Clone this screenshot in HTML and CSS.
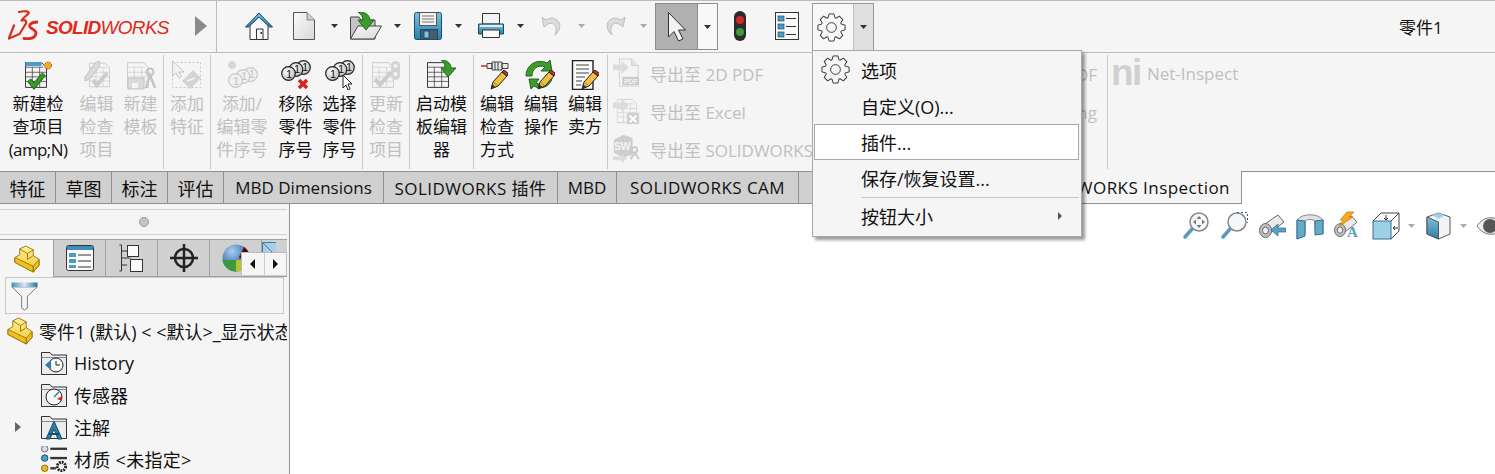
FILE: index.html
```html
<!DOCTYPE html>
<html lang="zh-CN">
<head>
<meta charset="utf-8">
<title>SOLIDWORKS</title>
<link rel="stylesheet" href="styles.css">
</head>
<body>
<svg class="defs" aria-hidden="true">
  <defs>
    <linearGradient id="gBlue" x1="0" y1="0" x2="0" y2="1"><stop offset="0" stop-color="#7fc0dc"/><stop offset="1" stop-color="#2b7ea8"/></linearGradient>
    <linearGradient id="gDoc" x1="0" y1="0" x2="1" y2="1"><stop offset="0" stop-color="#fafafa"/><stop offset="1" stop-color="#d8d8d8"/></linearGradient>
    <linearGradient id="gYel" x1="0" y1="0" x2="0" y2="1"><stop offset="0" stop-color="#fff0a0"/><stop offset="1" stop-color="#f5c828"/></linearGradient>
    <linearGradient id="gFun" x1="0" y1="0" x2="1" y2="0"><stop offset="0" stop-color="#3c8fbd"/><stop offset=".5" stop-color="#d4ecf6"/><stop offset="1" stop-color="#2b6f98"/></linearGradient>
    <radialGradient id="gCoin" cx=".4" cy=".35" r=".7"><stop offset="0" stop-color="#ffffff"/><stop offset="1" stop-color="#b8b8b8"/></radialGradient>
    <radialGradient id="gGloss" cx=".35" cy=".25" r=".7"><stop offset="0" stop-color="#a8d0f0"/><stop offset="1" stop-color="#1c58a8"/></radialGradient>
    <symbol id="tooth8" viewBox="-16 -16 32 32">
      <g fill="none" stroke-linejoin="round">
        <path id="t1" d="M-3.500-10-2.500-14H2.500L3.500-10 4.600-9.600"/>
        <use href="#t1" transform="rotate(45)"/><use href="#t1" transform="rotate(90)"/><use href="#t1" transform="rotate(135)"/>
        <use href="#t1" transform="rotate(180)"/><use href="#t1" transform="rotate(225)"/><use href="#t1" transform="rotate(270)"/><use href="#t1" transform="rotate(315)"/>
        <circle r="5"/>
      </g>
    </symbol>
    <symbol id="coinsOn" viewBox="0 0 30 23">
      <g stroke="#222" stroke-width="1.200" fill="url(#gCoin)">
        <circle cx="22.500" cy="7.500" r="6.800"/><circle cx="15" cy="9.500" r="6.800"/><circle cx="7.500" cy="13.500" r="6.800"/>
      </g>
      <g fill="#111" font-family="Liberation Sans, sans-serif" font-size="11" text-anchor="middle">
        <text x="24" y="11">1</text><text x="16" y="13">1</text><text x="8" y="17.500">1</text>
      </g>
    </symbol>
    <symbol id="coinsOff" viewBox="0 0 30 23">
      <g stroke="#c8c8c8" stroke-width="1.200" fill="#f0f0f0">
        <circle cx="22.500" cy="7.500" r="6.800"/><circle cx="15" cy="9.500" r="6.800"/><circle cx="7.500" cy="13.500" r="6.800"/>
      </g>
      <g fill="#c4c4c4" font-family="Liberation Sans, sans-serif" font-size="11" text-anchor="middle">
        <text x="24" y="11">1</text><text x="16" y="13">1</text><text x="8" y="17.500">1</text>
      </g>
    </symbol>
    <symbol id="sheet" viewBox="0 0 24 28">
      <path d="M.5.5H18L23.500 6V27.500H.5Z" fill="#f4f4f4" stroke="currentColor"/>
      <path d="M.5 5.500H20M.5 11H23.500M.5 16H23.500M.5 21H23.500M8 5.500V27M16 5.500V27" fill="none" stroke="currentColor" stroke-width=".7"/>
    </symbol>
    <symbol id="pencil" viewBox="0 0 18 20">
      <path d="M1 19 3 12 12 2 17 6 8 16Z" fill="#f2c040" stroke="#222"/>
      <path d="M3 12 8 16" stroke="#a87a10"/>
      <path d="M12 2 14 0 18.500 3.500 17 6Z" fill="#c8302b" stroke="#222"/>
      <path d="M1 19 2 14 5.500 17Z" fill="#333"/>
    </symbol>
    <symbol id="cube" viewBox="0 0 27 29">
      <path d="M1 13 6 10V4L12 1 20 5V11L26 15V21L20 28 1 18Z" fill="url(#gYel)" stroke="#9a7a10" stroke-linejoin="round"/>
      <path d="M1 13 20 22V28L1 18ZM20 22 26 15V21L20 28Z" fill="#f0c020" stroke="#9a7a10" stroke-linejoin="round"/>
      <path d="M6 4 14 9 20 5M14 9V15L20 11" fill="none" stroke="#9a7a10"/>
    </symbol>
    <symbol id="folder" viewBox="0 0 28 26">
      <path d="M1.500 24.500V2.500H10L12 5H26.500V24.500Z" fill="#ececec" stroke="#333"/>
      <path d="M1.500 7.500H26.500" stroke="#888" fill="none"/>
    </symbol>
    <symbol id="caret" viewBox="0 0 7 4"><path d="M0 0H7L3.500 4Z" fill="currentColor"/></symbol>
    <symbol id="mag" viewBox="0 0 28 28">
      <circle cx="17" cy="10" r="9" fill="#f4f8fb" stroke="#888" stroke-width="1.500"/>
      <path d="M10 17 3 25" stroke="#5c9abb" stroke-width="3.500" stroke-linecap="round"/>
    </symbol>
    <symbol id="tele" viewBox="0 0 28 24">
      <path d="M4 12 20 1 26 8 11 20Z" fill="#eaeaea" stroke="#666"/>
      <ellipse cx="7.500" cy="16.500" rx="6" ry="7" fill="#c0c0c0" stroke="#666"/>
      <ellipse cx="7.500" cy="16.500" rx="3" ry="3.500" fill="#eee" stroke="#666"/>
    </symbol>
  </defs>
</svg>

<header class="topbar">
  <div class="brand">
    <svg class="ds" viewBox="8 8 30 30"><g fill="none" stroke="#df2a20" stroke-linecap="round" stroke-linejoin="round"><path d="M19 10C25 8.500 30 9.500 28.500 11.500L22.500 17" stroke-width="2.200"/><path d="M21.500 18.500C26 17 27.500 20 25 23L19.500 32 9 36.500" stroke-width="2.200"/><path d="M14 23.500 9 36" stroke-width="2.200"/><path d="M37.500 20C31 20 27.500 23.500 31 26 35.500 28.500 38 31 34 35 31 37 27.500 37 24 36.500" stroke-width="2.800"/></g></svg>
    <span class="wordmark"><b>SOLID</b><i>WORKS</i></span>
    <span class="brand-arrow"></span>
  </div>
  <svg class="ti t-home" viewBox="0 0 28 28"><path d="M5 13V27.500H23V13L14 5Z" fill="#fafafa" stroke="#333"/><path d="M.5 15 14 1 27.500 15 24.500 15 14 5 3.500 15Z" fill="url(#gBlue)" stroke="#17506e"/><path d="M11.500 27.500V17H18V27.500Z" fill="#f4f4f4" stroke="#333"/><rect x="15.500" y="20" width="1.500" height="2" fill="#333"/></svg>
  <svg class="ti t-doc" viewBox="0 0 22 28"><path d="M.5 .5H14L21.500 8V27.500H.5Z" fill="url(#gDoc)" stroke="#555" stroke-linejoin="round"/><path d="M14 .5V8H21.500" fill="#ccc" stroke="#888"/></svg>
  <svg class="ca c-1 dark"><use href="#caret"/></svg>
  <svg class="ti t-open" viewBox="0 0 32 28"><path d="M.5 27V5H9L11 8H25V27Z" fill="#c4c4c4" stroke="#444"/><path d="M.5 27 8 14H31.500L24 27Z" fill="url(#gDoc)" stroke="#444"/><path d="M8 0C15 0 19 2 20 8H24L16 18 8 8H13C13 5 11 2 8 0Z" fill="#3f9a2e" stroke="#1c6a1a"/></svg>
  <svg class="ca c-2 dark"><use href="#caret"/></svg>
  <svg class="ti t-save" viewBox="0 0 28 28"><rect x=".5" y=".5" width="27" height="27" rx="2" fill="url(#gBlue)" stroke="#14506e"/><rect x="5.500" y=".5" width="17" height="13" fill="#f4f4f4" stroke="#555"/><path d="M8 4H20M8 7H20M8 10H20" stroke="#777"/><rect x="6.500" y="17.500" width="17" height="10" fill="#4a5a66" stroke="#14506e"/><rect x="10" y="19" width="5" height="7" fill="#8cc0da" stroke="#14506e"/></svg>
  <svg class="ca c-3 dark"><use href="#caret"/></svg>
  <svg class="ti t-print" viewBox="0 0 26 26"><path d="M4.500 11V.5H21.500V11Z" fill="#f2f2f2" stroke="#333"/><path d="M.5 11H25.500V21H.5Z" fill="url(#gBlue)" stroke="#14506e"/><path d="M4.500 17V24.500H21.500V17Z" fill="#fafafa" stroke="#333"/><rect x="2" y="12" width="22" height="2" fill="#dbeef6"/></svg>
  <svg class="ca c-4 dark"><use href="#caret"/></svg>
  <svg class="ti t-undo" viewBox="0 0 22 22"><path d="M1 2 3 12 7 9C11 7 16 9 15 17L14 20C20 15 20 8 16 5 12 2 8 3 5 5Z" fill="#dcdcdc" stroke="#bdbdbd"/></svg>
  <svg class="ca c-5 light"><use href="#caret"/></svg>
  <svg class="ti t-redo" viewBox="0 0 22 22"><path d="M21 2 19 12 15 9C11 7 6 9 7 17L8 20C2 15 2 8 6 5 10 2 14 3 17 5Z" fill="#dcdcdc" stroke="#bdbdbd"/></svg>
  <svg class="ca c-6 light"><use href="#caret"/></svg>
  <div class="sel">
    <span class="sel-main"><svg class="arrow-ic" viewBox="0 0 20 32"><path d="M1.500 1.500V26L7 20.500 11.500 30 16 28 11.500 19H18.500Z" fill="#f2f2f2" stroke="#333" stroke-linejoin="round"/></svg></span>
    <span class="sel-drop"><svg class="ca dark"><use href="#caret"/></svg></span>
  </div>
  <svg class="ti t-light" viewBox="0 0 12 30"><rect width="12" height="30" rx="6" fill="#2b2b2b"/><circle cx="6" cy="9" r="4" fill="#d22a2a"/><circle cx="6" cy="21" r="4" fill="#3c9a3c"/></svg>
  <svg class="ti t-list" viewBox="0 0 24 28"><rect x=".5" y=".5" width="23" height="27" fill="#fafafa" stroke="#333"/><rect x="3" y="4" width="6" height="5" fill="#4d9cc6" stroke="#14506e" stroke-width=".7"/><rect x="3" y="12" width="6" height="5" fill="#4d9cc6" stroke="#14506e" stroke-width=".7"/><rect x="3" y="20" width="6" height="5" fill="#4d9cc6" stroke="#14506e" stroke-width=".7"/><path d="M11 6.500H21M11 14.500H21M11 22.500H21" stroke="#333"/></svg>
  <div class="gearbtn">
    <span class="gear-main"><svg class="gear"><use href="#tooth8"/></svg></span>
    <span class="gear-drop"><svg class="ca dark"><use href="#caret"/></svg></span>
  </div>
  <div class="doc-title">零件1</div>
</header>

<section class="ribbon">
  <div class="grp g1">
    <button class="rb w66"><svg class="ri" viewBox="0 0 32 30"><use href="#sheet" x="3" y="1" width="22" height="28" class="ink"/><rect x="3.500" y="2" width="16" height="4" fill="#4d9cc6"/><circle cx="26" cy="5.500" r="3.500" fill="#f5a91e" stroke="#b8500e" stroke-dasharray="1.500 1"/><path d="M7 20 12 26 22 14" fill="none" stroke="#1c6a1a" stroke-width="5"/><path d="M7 20 12 26 22 14" fill="none" stroke="#3f9a2e" stroke-width="3"/></svg><span>新建检<br>查项目<br><em class="amp">(amp;N)</em></span></button>
    <button class="rb w41 off"><svg class="ri" viewBox="0 0 32 30"><use href="#sheet" x="8" y="1" width="21" height="28"/><path d="M12 20 16 25 26 13" fill="none" stroke="#ccc" stroke-width="4"/><path d="M4 17 14 3 18 1 19 6 9 19 4 21Z" fill="#dadada" stroke="#c4c4c4"/></svg><span>编辑<br>检查<br>项目</span></button>
    <button class="rb w41 off"><svg class="ri" viewBox="0 0 32 30"><use href="#sheet" x="2" y="1" width="22" height="28"/><circle cx="25" cy="12" r="3.500" fill="none" stroke="#c4c4c4" stroke-width="2"/><path d="M21 28 25 15 30 28" fill="none" stroke="#c4c4c4" stroke-width="2.400"/><rect x="3" y="18" width="16" height="11" fill="#dadada" stroke="#c4c4c4"/><rect x="7" y="23" width="6" height="5" fill="#f4f4f4"/></svg><span>新建<br>模板</span></button>
  </div>
  <div class="grp g2">
    <button class="rb w44 off"><svg class="ri" viewBox="0 0 32 30"><rect x="1.500" y="2.500" width="28" height="25" fill="none" stroke="#c8c8c8" stroke-dasharray="2 2"/><path d="M1.500 1V16L5 13 8 18 10.500 16.500 8 12H13Z" fill="#f2f2f2" stroke="#c4c4c4"/><path d="M11 21 22 10 30 18 19 29Z" fill="#d4d4d4"/><path d="M16 21 24 18" stroke="#f4f4f4" stroke-width="1.500"/></svg><span>添加<br>特征</span></button>
  </div>
  <div class="grp g3">
    <button class="rb w60 off"><svg class="ri" viewBox="0 0 32 30"><circle cx="6" cy="5" r="3.500" fill="#d8d8d8" stroke="#ccc" stroke-dasharray="1.500 1"/><use href="#coinsOff" x="2" y="7" width="30" height="23"/></svg><span>添加/<br>编辑零<br>件序号</span></button>
    <button class="rb w41 on"><svg class="ri" viewBox="0 0 32 30"><use href="#coinsOn" x="1" y="0" width="30" height="23"/><path d="M19 20 27 28M27 20 19 28" stroke="#d8231a" stroke-width="3.500"/></svg><span>移除<br>零件<br>序号</span></button>
    <button class="rb w41 on"><svg class="ri" viewBox="0 0 32 30"><use href="#coinsOn" x="1" y="0" width="30" height="23"/><path d="M19 15V28L22 25 24 30 26 29 24 24H28Z" fill="#fff" stroke="#222"/></svg><span>选择<br>零件<br>序号</span></button>
  </div>
  <div class="grp g4">
    <button class="rb w44 off"><svg class="ri" viewBox="0 0 32 30"><use href="#sheet" x="2" y="1" width="22" height="28"/><path d="M5 19 10 25 21 12" fill="none" stroke="#ccc" stroke-width="4"/><rect x="21" y="1" width="9" height="19" rx="4.500" fill="#d4d4d4"/><circle cx="25.500" cy="6" r="2" fill="#f4f4f4"/><circle cx="25.500" cy="14" r="2" fill="#f4f4f4"/></svg><span>更新<br>检查<br>项目</span></button>
  </div>
  <div class="grp g5">
    <button class="rb w63 on"><svg class="ri" viewBox="0 0 32 30"><use href="#sheet" x="1" y="1" width="22" height="28"/><path d="M15 0C22 0 25 4 25 8H30L22 17 15 8H19C19 4 18 2 15 0Z" fill="#3f9a2e" stroke="#1c6a1a"/></svg><span>启动模<br>板编辑<br>器</span></button>
  </div>
  <div class="grp g6">
    <button class="rb w44 on"><svg class="ri" viewBox="0 0 32 30"><path d="M0 6H6" stroke="#d8231a" stroke-width="1.500"/><path d="M6 3.500H11V8.500H6ZM11 2H21V10H11ZM21 3.500H27V8.500H21Z" fill="#e8e8e8" stroke="#444"/><path d="M14 2V10M17 2V10" stroke="#444"/><use href="#pencil" x="9" y="10" width="18" height="20"/></svg><span>编辑<br>检查<br>方式</span></button>
    <button class="rb w44 on"><svg class="ri" viewBox="0 0 32 30"><path d="M1 16C1 5 12-2 22 3L25 0 27 11 16 11 20 7C13 4 7 9 7 16ZM27 14V17C27 25 17 31 9 26L6 29 4 19H14L11 23C17 26 21 22 21 15Z" fill="#3f9a2e" stroke="#1c6a1a"/><use href="#pencil" x="12" y="10" width="18" height="20"/></svg><span>编辑<br>操作</span></button>
    <button class="rb w44 on"><svg class="ri" viewBox="0 0 32 30"><path d="M3.500 .5H24V29.500H3.500Z" fill="#fafafa" stroke="#222" stroke-width="1.400"/><path d="M7 5H20M7 9H20M7 13H20M7 17H16M7 21H13M7 25H12" stroke="#444"/><use href="#pencil" x="12" y="10" width="18" height="20"/></svg><span>编辑<br>卖方</span></button>
  </div>
  <div class="grp g7">
    <div class="col col-a">
      <div class="xp off"><svg class="xi" viewBox="0 0 30 32"><path d="M8 1H21L28 8V30H8Z" fill="#f4f4f4" stroke="#d0d0d0"/><path d="M21 1V8H28" fill="#e4e4e4" stroke="#d0d0d0"/><path d="M1 7H10V3L18 10 10 17V13H1Z" fill="#dcdcdc"/><rect x="11" y="20" width="18" height="9" fill="#ccc"/><text x="20" y="27.500" class="pdf">PDF</text></svg><span>导出至 2D PDF</span></div>
      <div class="xp off"><svg class="xi" viewBox="0 0 30 32"><use href="#sheet" x="5" y="2" width="22" height="28"/><path d="M1 7H10V3L18 10 10 17V13H1Z" fill="#dcdcdc"/><rect x="16" y="18" width="13" height="12" fill="#d0d0d0"/><path d="M19 21 26 28M26 21 19 28" stroke="#fff" stroke-width="2"/></svg><span>导出至 Excel</span></div>
      <div class="xp off"><svg class="xi" viewBox="0 0 30 32"><path d="M2 6 12 1 22 4V22L12 25 2 20Z" fill="#cfcfcf"/><text x="11" y="17" class="swt">SW</text><circle cx="24" cy="17" r="3" fill="none" stroke="#c8c8c8" stroke-width="2"/><path d="M20 27 24 20 29 27" fill="none" stroke="#c8c8c8" stroke-width="2"/><path d="M1 24H10V21L16 26 10 31V28H1Z" fill="#dcdcdc"/></svg><span>导出至 SOLIDWORKS</span></div>
    </div>
    <div class="col col-b">
      <div class="xp off"><span>导出至 3D PDF</span></div>
      <div class="xp off"><span>导出至 eDrawing</span></div>
    </div>
  </div>
  <div class="grp g8">
    <div class="xp off ni-row"><span class="ni">ni</span><span>Net-Inspect</span></div>
  </div>
</section>

<nav class="tabs">
  <span class="tab tcn">特征</span>
  <span class="tab tcn">草图</span>
  <span class="tab tcn">标注</span>
  <span class="tab tcn">评估</span>
  <span class="tab t160">MBD Dimensions</span>
  <span class="tab t174 wide">SOLIDWORKS 插件</span>
  <span class="tab t59">MBD</span>
  <span class="tab t182 wide">SOLIDWORKS CAM</span>
  <span class="tab tab-fill"></span>
  <span class="tab tab-active wide">SOLIDWORKS Inspection</span>
  <span class="tab-rest"></span>
</nav>

<div class="work">
  <aside class="panel">
    <div class="grip"><span class="dot"></span></div>
    <div class="ptabs">
      <span class="pt pt-on"><svg class="pi" viewBox="0 0 27 29"><use href="#cube"/></svg></span>
      <span class="pt"><svg class="pi" viewBox="0 0 28 26"><rect x=".5" y=".5" width="27" height="25" rx="2" fill="#fafafa" stroke="#333"/><rect x="1" y="1" width="26" height="4" fill="#3c8fbd"/><rect x="3" y="8" width="7" height="4" fill="#4d9cc6"/><rect x="3" y="14" width="7" height="4" fill="#4d9cc6"/><rect x="3" y="20" width="7" height="3" fill="#4d9cc6"/><path d="M12 10H25M12 16H25M12 22H25" stroke="#333"/></svg></span>
      <span class="pt"><svg class="pi" viewBox="0 0 28 28"><path d="M3.500 1V27M3.500 7H9M3.500 21H9" stroke="#333" fill="none"/><path d="M1.500 1H3.500M1.500 27H3.500" stroke="#333"/><rect x="9.500" y="1.500" width="11" height="11" fill="#fafafa" stroke="#333"/><rect x="12.500" y="15.500" width="12" height="12" fill="#fafafa" stroke="#333"/><path d="M3.500 14H12.500" stroke="#333"/></svg></span>
      <span class="pt"><svg class="pi" viewBox="0 0 28 28"><circle cx="14" cy="14" r="9" fill="none" stroke="#222" stroke-width="2.500"/><path d="M14 0V28M0 14H28" stroke="#222" stroke-width="2.500"/></svg></span>
      <span class="pt"><svg class="pi" viewBox="0 0 28 28"><circle cx="14" cy="14" r="13.500" fill="url(#gGloss)"/><path d="M17 14 22 3A13.500 13.500 0 0 1 27.500 14Z" fill="#2a1010" stroke="#b02a20"/><path d="M14 16H27.500A13.500 13.500 0 0 1 14 27.500Z" fill="#b8c030"/><path d="M14 16V27.500A13.500 13.500 0 0 1 .5 16Z" fill="#3c9a3c"/></svg></span>
      <span class="pt pt-cut"><svg class="pi-cut" viewBox="0 0 14 14"><rect x=".5" y=".5" width="20" height="20" fill="#a8cfe4" stroke="#3a7ea8"/><path d="M0 0 10 10" stroke="#3a7ea8"/></svg></span>
      <span class="ptnav"><i class="nav-l"></i><i class="nav-r"></i></span>
    </div>
    <div class="filter"><svg class="funnel" viewBox="0 0 28 30"><path d="M1 5H27L17 15V27L14 29 11 27V15Z" fill="#f4f4f4" stroke="#777"/><path d="M.5.5H27.500V5H.5Z" fill="url(#gFun)"/></svg></div>
    <ul class="tree">
      <li class="node root"><svg class="ni-ic" viewBox="0 0 27 29"><use href="#cube"/></svg><span class="lbl">零件1 (默认) &lt; &lt;默认&gt;_显示状态 1&gt;</span></li>
      <li class="node"><svg class="fo" viewBox="0 0 28 26"><use href="#folder"/><circle cx="16" cy="15" r="7" fill="#f8f8f8" stroke="#222"/><path d="M16 11V15H20" fill="none" stroke="#222"/><path d="M5 15 11 10V20Z" fill="#2f7ba4"/></svg><span class="lbl">History</span></li>
      <li class="node"><svg class="fo" viewBox="0 0 28 26"><use href="#folder"/><circle cx="14" cy="15" r="8" fill="#f8f8f8" stroke="#222"/><path d="M14 15 19 10" stroke="#2f7ba4" stroke-width="1.500"/><path d="M17 17 22 14V19Z" fill="#d8231a"/></svg><span class="lbl">传感器</span></li>
      <li class="node"><i class="exp"></i><svg class="fo" viewBox="0 0 28 26"><use href="#folder"/><path d="M6 25 14 7 22 25H18L14 15 10 25Z" fill="#2f7ba4" stroke="#14506e"/><path d="M9 20H19" stroke="#14506e" stroke-width="2"/></svg><span class="lbl">注解</span></li>
      <li class="node"><svg class="fo" viewBox="0 0 28 28"><circle cx="4" cy="3" r="3.500" fill="#ddd" stroke="#666"/><path d="M10 3H28" stroke="#333" stroke-width="2.500"/><circle cx="4" cy="13" r="3.500" fill="#4d9cc6" stroke="#14506e"/><path d="M10 13H28" stroke="#333" stroke-width="2.500"/><circle cx="4" cy="24" r="3.500" fill="#e9b81a" stroke="#8a6a10"/><path d="M10 24H16" stroke="#333" stroke-width="2.500"/><circle cx="22" cy="22" r="4.500" fill="#f4f4f4" stroke="#222" stroke-width="3" stroke-dasharray="2 1"/></svg><span class="lbl wide-lbl">材质 &lt;未指定&gt;</span></li>
    </ul>
  </aside>
  <main class="view">
    <div class="vbar">
      <svg class="vi v-fit" viewBox="0 0 28 28"><use href="#mag"/><path d="M17 4 14.500 7H19.500ZM17 16 14.500 13H19.500ZM11 10 14 7.500V12.500ZM23 10 20 7.500V12.500Z" fill="#777"/></svg>
      <svg class="vi v-area" viewBox="0 0 28 28"><use href="#mag"/><path d="M17 .5H27.500V11" fill="none" stroke="#555" stroke-dasharray="2 2"/></svg>
      <svg class="vi v-prev" viewBox="0 0 28 24"><use href="#tele"/><path d="M28 14H20V10L13 16 20 22V18H28Z" fill="#5b9fc4" stroke="#2d6f94" stroke-width=".7"/></svg>
      <svg class="vi v-sect" viewBox="0 0 28 26"><path d="M1 7C6 0 22 0 27 7V21C22 17 20 17 19 17V8C16 6 12 6 9 8V21L1 26Z" fill="#e2e2e2" stroke="#888"/><path d="M1 7 9 8V23L1 26ZM19 8 27 7V21L19 22Z" fill="#6aa8c8" stroke="#2d6f94"/></svg>
      <svg class="vi v-dyn" viewBox="0 0 30 31"><use href="#tele" y="4" width="26" height="22"/><path d="M7 9 14 1H21L16 6H20L7 15 10 9Z" fill="#f5a91e" stroke="#c47a10" stroke-width=".7"/><text x="14" y="26" class="va">A</text></svg>
      <svg class="vi v-orient" viewBox="0 0 28 28"><rect x="1" y="9" width="18" height="18" fill="#9dd0e6" stroke="#3a6f8c"/><path d="M1 9 9 1H27V19L19 27M19 9 27 1" fill="none" stroke="#444"/><path d="M14 3V8M12 6 14 8 16 6M26 16H21M23 14 21 16 23 18" fill="none" stroke="#333"/></svg>
      <svg class="ca v-c1 light"><use href="#caret"/></svg>
      <svg class="vi v-disp" viewBox="0 0 25 28"><path d="M12.500 1 24 5V22L12.500 27 1 22V5Z" fill="#f4f4f4" stroke="#555"/><path d="M1 5 12.500 10V27L1 22Z" fill="url(#gBlue)" stroke="#555"/><path d="M6 3 12.500 1 19 3 12.500 7Z" fill="#9dd0e6"/></svg>
      <svg class="ca v-c2 light"><use href="#caret"/></svg>
      <svg class="vi v-eye" viewBox="0 0 30 24"><path d="M1 12C8 1 22 1 29 12 22 23 8 23 1 12Z" fill="#eee" stroke="#777"/><circle cx="14" cy="12" r="7" fill="#555"/></svg>
    </div>
  </main>
</div>

<div class="menu">
  <div class="mi"><svg class="gear menu-gear"><use href="#tooth8"/></svg><span>选项</span></div>
  <div class="mi"><span>自定义(O)...</span></div>
  <div class="mi mi-hot"><span>插件...</span></div>
  <div class="mi"><span>保存/恢复设置...</span></div>
  <div class="msep"></div>
  <div class="mi"><span>按钮大小</span><i class="sub"></i></div>
</div>
</body>
</html>
```
FILE: styles.css
```css
* { box-sizing: border-box; }
html, body { margin: 0; height: 100%; }
body {
  width: 1495px; height: 474px; overflow: hidden; background: #fff; position: relative;
  font-family: "Open Sans", "Noto Sans CJK SC", sans-serif; font-size: 17px; color: #111;
}
.defs { position: absolute; width: 0; height: 0; }
svg { display: block; flex: none; overflow: hidden; }

/* top bar */
.topbar { display: flex; align-items: center; height: 53px; background: #f5f5f5; border-top: 1px solid #bbb; border-bottom: 1px solid #bbb; padding-bottom: 2px; }
.brand { display: flex; align-items: center; width: 217px; height: 51px; margin-bottom: -2px; border-right: 1px solid #bbb; flex: none; padding-left: 8px; }
.ds { width: 30px; height: 30px; margin-top: -4px; }
.wordmark { width: 157px; padding-left: 8px; font-family: "Liberation Sans", sans-serif; font-size: 19px; color: #df2a20; white-space: nowrap; letter-spacing: -.7px; margin-top: 2px; }
.wordmark b { font-style: italic; font-weight: 700; }
.wordmark i { font-weight: 400; }
.brand-arrow { width: 0; height: 0; border-left: 12px solid #8a8a8a; border-top: 10px solid transparent; border-bottom: 10px solid transparent; margin-top: -2px; }
.ti { flex: none; }
.t-home { width: 28px; height: 28px; margin-left: 28px; }
.t-doc { width: 22px; height: 28px; margin-left: 20px; }
.ca { width: 7px; height: 4px; flex: none; }
.ca.dark { color: #333; }
.ca.light { color: #aaa; }
.c-1 { margin-left: 16px; }
.t-open { width: 32px; height: 28px; margin-left: 12px; }
.c-2 { margin-left: 12px; }
.t-save { width: 28px; height: 28px; margin-left: 13px; }
.c-3 { margin-left: 13px; }
.t-print { width: 26px; height: 26px; margin-left: 16px; }
.c-4 { margin-left: 13px; }
.t-undo { width: 22px; height: 22px; margin-left: 17px; }
.c-5 { margin-left: 15px; }
.t-redo { width: 22px; height: 22px; margin-left: 19px; }
.c-6 { margin-left: 14px; }
.sel { display: flex; width: 63px; height: 47px; margin: 2px 0 0 8px; border: 1px solid #8c8c8c; flex: none; }
.sel-main { width: 41px; background: #b0b0b0; display: flex; align-items: center; justify-content: center; }
.arrow-ic { width: 20px; height: 32px; }
.sel-drop { flex: 1; background: #f8f8f8; display: flex; align-items: center; justify-content: center; border-left: 1px solid #8c8c8c; }
.t-light { width: 12px; height: 30px; margin-left: 16px; }
.t-list { width: 24px; height: 28px; margin-left: 29px; }
.gearbtn { display: flex; width: 62px; height: 47px; margin: 2px 0 0 13px; border: 1px solid #9a9a9a; border-bottom: 0; flex: none; }
.gear-main { width: 40px; display: flex; align-items: center; justify-content: center; background: #f8f8f8; padding-right: 3px; }
.gear-drop { flex: 1; background: #e0e0e0; display: flex; align-items: center; justify-content: center; border-left: 1px solid #c0c0c0; }
.gear { width: 31px; height: 31px; stroke: #3a3a3a; }
.doc-title { margin: 2px 0 0 525px; }

/* ribbon */
.ribbon { display: flex; height: 118px; background: #f5f5f5; padding: 2px 0; }
.grp { display: flex; height: 114px; border-right: 1px solid #c8c8c8; flex: none; padding-top: 5px; }
.g1 { width: 164px; padding-left: 5px; }
.g2 { width: 47px; padding-left: 1px; }
.g3 { width: 152px; padding-left: 1px; }
.g4 { width: 47px; padding-left: 1px; }
.g5 { width: 64px; }
.g6 { width: 134px; padding-left: 1px; }
.g7 { width: 500px; padding-left: 3px; padding-top: 3px; }
.g8 { width: 300px; border-right: 0; padding-left: 3px; padding-top: 3px; }
.rb { display: flex; flex-direction: column; align-items: center; border: 0; padding: 0; background: none; font: inherit; color: #111; text-align: center; line-height: 23px; flex: none; }
.rb span { display: block; white-space: nowrap; margin-top: 2px; }
.amp { font-style: normal; letter-spacing: -.6px; }
.ri { width: 32px; height: 30px; }
.w66 { width: 66px; margin-right: 5px; }
.w41 { width: 41px; margin-right: 3px; }
.w44 { width: 44px; }
.w60 { width: 60px; margin-right: 3px; }
.w63 { width: 63px; }
.off { color: #c0c0c0; }
.rb.off { color: #c0c0c0; }
.rb.off .ri { color: #c8c8c8; }
.rb.on .ri { color: #222; }
.g1 .rb:first-child .ri { color: #222; }
.col { display: flex; flex-direction: column; gap: 8px; }
.col-a { width: 366px; }
.col-b { width: 120px; align-items: flex-end; }
.xp { display: flex; align-items: center; height: 30px; white-space: nowrap; }
.xi { width: 30px; height: 30px; margin-right: 9px; color: #ccc; }
.pdf { font-family: "Liberation Sans", sans-serif; font-weight: 700; font-size: 7px; fill: #f4f4f4; text-anchor: middle; }
.swt { font-family: "Liberation Sans", sans-serif; font-weight: 700; font-size: 11px; fill: #f4f4f4; text-anchor: middle; }
.ni-row { gap: 6px; }
.ni { font-family: "Liberation Sans", sans-serif; font-weight: 700; font-size: 37px; letter-spacing: -1.500px; line-height: 30px; color: #d0d0d0; }

/* tabs */
.tabs { display: flex; height: 33px; }
.tab { display: flex; align-items: center; justify-content: center; height: 33px; background: #d0d0d0; border-top: 1px solid #909090; border-bottom: 1px solid #909090; border-right: 1px solid #909090; white-space: nowrap; flex: none; color: #111; font-size: 17px; }
.tcn { width: 56px; font-size: 18px; }
.t160 { width: 160px; }
.t174 { width: 174px; }
.t59 { width: 59px; }
.t182 { width: 182px; }
.wide { letter-spacing: .45px; }
.tab-fill { width: 241px; }
.tab-active { width: 202px; background: #f5f5f5; border-top: 0; justify-content: flex-end; padding-right: 11px; }
.tab-rest { flex: 1; border-top: 1px solid #909090; }

/* work area */
.work { display: flex; height: 270px; }
.panel { width: 290px; flex: none; background: #f5f5f5; border-right: 1px solid #909090; overflow: hidden; }
.grip { height: 26px; margin-top: 5px; display: flex; align-items: center; justify-content: center; border-top: 1px solid #d0d0d0; border-bottom: 1px solid #d0d0d0; width: 287px; }
.dot { width: 10px; height: 10px; border-radius: 50%; background: #c4c4c4; border: 1px solid #999; }
.ptabs { display: flex; height: 38px; margin-top: 4px; position: relative; width: 287px; }
.pt { width: 52px; height: 38px; flex: none; background: #d0d0d0; border-top: 1px solid #a0a0a0; border-bottom: 1px solid #a0a0a0; border-right: 1px solid #a0a0a0; display: flex; align-items: center; justify-content: center; }
.pt-on { width: 54px; background: #f5f5f5; border-bottom: 0; }
.pt-cut { width: 25px; border-right: 0; align-items: flex-start; justify-content: flex-start; padding: 2px 0 0 0; }
.pi { width: 28px; height: 28px; }
.pi-cut { width: 14px; height: 14px; }
.ptnav { position: absolute; left: 241px; top: 13px; width: 46px; height: 24px; display: flex; background: #f5f5f5; border: 1px solid #bbb; border-bottom-color: #d0d0d0; }
.ptnav i { flex: 1; position: relative; display: flex; align-items: center; justify-content: center; }
.nav-l { border-right: 1px solid #ccc; }
.nav-l::after { content: ""; border-right: 5px solid #111; border-top: 5px solid transparent; border-bottom: 5px solid transparent; }
.nav-r::after { content: ""; border-left: 5px solid #111; border-top: 5px solid transparent; border-bottom: 5px solid transparent; }
.filter { margin-left: 5px; width: 279px; height: 37px; border: 1px solid #c8c8c8; padding: 4px 0 0 5px; }
.funnel { width: 27px; height: 29px; }
.tree { list-style: none; margin: 0; padding: 1px 0 0 0; font-size: 18px; }
.node { display: flex; align-items: center; height: 32px; padding-left: 40px; position: relative; white-space: nowrap; }
.root { padding-left: 7px; width: 287px; overflow: hidden; }
.ni-ic { width: 26px; height: 28px; margin-right: 6px; }
.fo { width: 28px; height: 26px; margin-right: 6px; }
.wide-lbl { letter-spacing: .3px; }
.exp { position: absolute; left: 15px; top: 11px; border-left: 6px solid #666; border-top: 5px solid transparent; border-bottom: 5px solid transparent; }

/* view */
.view { flex: 1; overflow: hidden; min-width: 0; }
.vbar { display: flex; align-items: center; height: 28px; margin-top: 8px; padding-left: 892px; width: 1300px; }
.vi { flex: none; height: 28px; width: 28px; }
.v-area { margin-left: 10px; }
.v-prev { margin-left: 10px; }
.v-sect { margin-left: 10px; }
.v-dyn { margin-left: 9px; width: 30px; height: 31px; }
.va { font-family: "Liberation Serif", serif; font-weight: 700; font-size: 15px; fill: #5b9fc4; }
.v-orient { margin-left: 9px; }
.v-c1 { margin-left: 8px; }
.v-disp { margin-left: 11px; width: 25px; }
.v-c2 { margin-left: 9px; }
.v-eye { margin-left: 9px; width: 30px; height: 24px; }

/* dropdown menu */
.menu { position: absolute; left: 812px; top: 50px; width: 270px; height: 187px; background: #f5f5f5; border: 1px solid #a8a8a8; box-shadow: 3px 3px 3px rgba(0,0,0,.4); padding: 1px 2px 0 1px; font-size: 18px; }
.mi { height: 36px; display: flex; align-items: center; padding-left: 46px; position: relative; border: 1px solid transparent; }
.mi-hot { background: #fff; border-color: #a8a8a8; }
.menu-gear { position: absolute; left: 5px; top: 1px; }
.msep { height: 1px; background: #c8c8c8; margin: 1px 0 0 47px; }
.sub { position: absolute; right: 16px; top: 13px; border-left: 4px solid #555; border-top: 4px solid transparent; border-bottom: 4px solid transparent; }
```
